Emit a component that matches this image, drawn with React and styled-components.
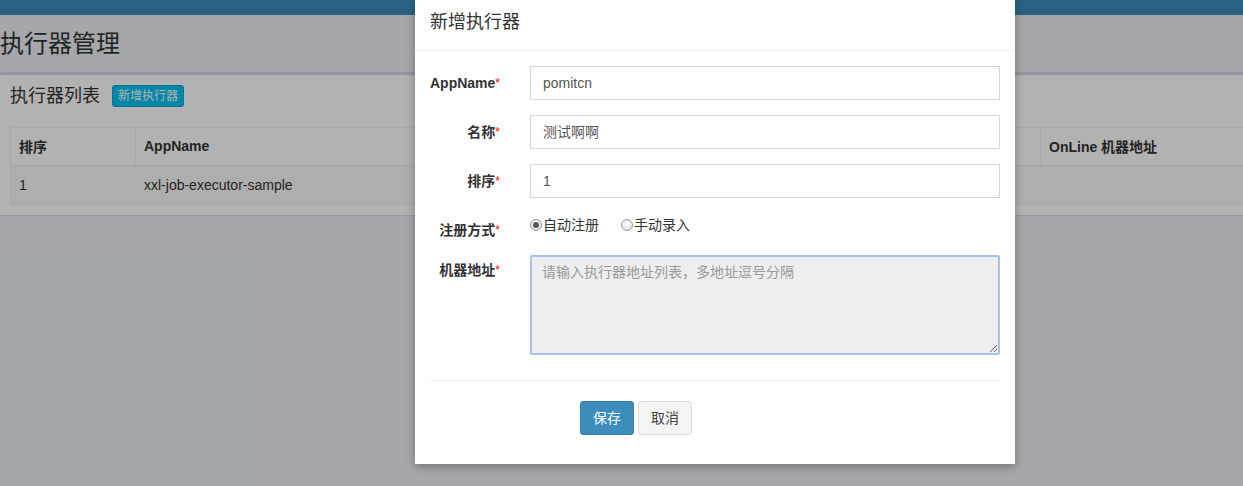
import styled, { createGlobalStyle } from 'styled-components'

const GlobalStyle = createGlobalStyle`
  html, body {
    margin: 0;
    padding: 0;
    background: #ecf0f5;
    overflow: hidden;
  }
  body {
    font-family: "Liberation Sans", "Noto Sans CJK SC", sans-serif;
    font-size: 14px;
    color: #333;
  }
  * { box-sizing: border-box; }
`

const Page = styled.div`
  width: 1243px;
  height: 486px;
  position: relative;
  overflow: hidden;
`

const TopBar = styled.div`
  height: 15px;
  background: #3c8dbc;
`

const PageTitle = styled.h1`
  margin: 0;
  padding: 14px 0 0;
  height: 57px;
  font-size: 24px;
  font-weight: 400;
  line-height: 30px;
  color: #333;
`

const Box = styled.div`
  width: 1270px;
  background: #fff;
  border-top: 3px solid #d2d6de;
  border-radius: 3px;
  box-shadow: 0 1px 1px rgba(0, 0, 0, 0.1);
  padding-bottom: 10px;
`

const BoxHeader = styled.div`
  display: flex;
  align-items: center;
  gap: 12px;
  padding: 9px 10px 19px;
`

const BoxTitle = styled.h3`
  margin: 0;
  font-size: 18px;
  font-weight: 400;
  line-height: 24px;
`

const SmallButton = styled.span`
  display: inline-block;
  background: #00c0ef;
  color: #fff;
  font-size: 12px;
  line-height: 20px;
  padding: 0 5px;
  border: 1px solid #00acd6;
  border-radius: 3px;
`

const Table = styled.table`
  margin: 0 10px;
  width: 1260px;
  border-collapse: collapse;
  border: 1px solid #f4f4f4;
`

const Th = styled.th`
  text-align: left;
  font-weight: 700;
  padding: 8px;
  height: 38px;
  border: 1px solid #f4f4f4;
  border-bottom-width: 2px;
  width: ${(p) => p.w || 'auto'};
`

const Td = styled.td`
  padding: 8px;
  height: 39px;
  border: 1px solid #f4f4f4;
  background: #f9f9f9;
  color: #333;
`

const Backdrop = styled.div`
  position: absolute;
  inset: 0;
  background: rgba(0, 0, 0, 0.3);
`

const Modal = styled.div`
  position: absolute;
  left: 415px;
  top: 0;
  width: 600px;
  background: #fff;
  box-shadow: 0 3px 9px rgba(0, 0, 0, 0.3);
`

const ModalHeader = styled.div`
  padding: 10px 15px 15px;
  border-bottom: 1px solid #f4f4f4;
  font-size: 18px;
  line-height: 25px;
  color: #333;
`

const ModalBody = styled.div`
  padding: 15px 15px 29px;
`

const FormRow = styled.div`
  display: grid;
  grid-template-columns: 85px 1fr;
  column-gap: 15px;
  align-items: start;
  margin-bottom: ${(p) => p.mb ?? 15}px;
`

const Label = styled.label`
  text-align: right;
  white-space: nowrap;
  font-weight: 700;
  font-size: 14px;
  line-height: 20px;
  padding-right: 15px;
  padding-top: ${(p) => p.pt || 7}px;
  height: ${(p) => p.h || 'auto'};
  color: #333;
`

const Req = styled.span`
  color: #f00;
  font-size: 12px;
  font-weight: 400;
  vertical-align: top;
`

const Input = styled.div`
  height: 34px;
  border: 1px solid #d2d6de;
  padding: 6px 12px;
  font-size: 14px;
  line-height: 20px;
  color: #555;
`

const TextArea = styled.textarea`
  display: block;
  width: 100%;
  height: 100px;
  border: 2px solid #a4c2f4;
  background: #eee;
  padding: 5px 10px;
  font-family: "Liberation Sans", "Noto Sans CJK SC", sans-serif;
  font-size: 14px;
  line-height: 20px;
  color: #555;
  outline: none;
  border-radius: 2px;
  &::placeholder { color: #999; }
`

const RadioGroup = styled.div`
  display: flex;
  align-items: flex-start;
  gap: 22px;
  padding-top: 2px;
  height: 27px;
`

const RadioItem = styled.span`
  display: inline-flex;
  align-items: center;
  font-size: 14px;
  line-height: 20px;
  color: #333;
`

const RadioDot = styled.span`
  width: 12px;
  height: 12px;
  border-radius: 50%;
  border: 1px solid #999;
  background: radial-gradient(circle at 50% 35%, #fdfdfd, #dcdcdc);
  margin-right: 1px;
  display: inline-flex;
  align-items: center;
  justify-content: center;
  &::after {
    content: '';
    width: 6px;
    height: 6px;
    border-radius: 50%;
    background: ${(p) => (p.checked ? '#555' : 'transparent')};
  }
`

const Divider = styled.div`
  height: 1px;
  background: #eee;
  margin: 25px 0 20px;
`

const Actions = styled.div`
  display: flex;
  gap: 4px;
  padding-left: 150px;
`

const Button = styled.span`
  display: inline-block;
  height: 34px;
  padding: 0 12px;
  line-height: 32px;
  font-size: 14px;
  border-radius: 3px;
  border: 1px solid ${(p) => (p.primary ? '#367fa9' : '#ddd')};
  background: ${(p) => (p.primary ? '#3c8dbc' : '#f4f4f4')};
  color: ${(p) => (p.primary ? '#fff' : '#444')};
`

export default function App() {
  return (
    <Page>
      <GlobalStyle />
      <TopBar />
      <PageTitle>执行器管理</PageTitle>
      <Box>
        <BoxHeader>
          <BoxTitle>执行器列表</BoxTitle>
          <SmallButton>新增执行器</SmallButton>
        </BoxHeader>
        <Table>
          <thead>
            <tr>
              <Th w="125px">排序</Th>
              <Th w="300px">AppName</Th>
              <Th w="300px">名称</Th>
              <Th w="305px">注册方式</Th>
              <Th>OnLine 机器地址</Th>
            </tr>
          </thead>
          <tbody>
            <tr>
              <Td>1</Td>
              <Td>xxl-job-executor-sample</Td>
              <Td>示例执行器</Td>
              <Td>自动注册</Td>
              <Td></Td>
            </tr>
          </tbody>
        </Table>
      </Box>
      <Backdrop />
      <Modal>
        <ModalHeader>新增执行器</ModalHeader>
        <ModalBody>
          <FormRow>
            <Label>AppName<Req>*</Req></Label>
            <Input>pomitcn</Input>
          </FormRow>
          <FormRow>
            <Label>名称<Req>*</Req></Label>
            <Input>测试啊啊</Input>
          </FormRow>
          <FormRow>
            <Label>排序<Req>*</Req></Label>
            <Input>1</Input>
          </FormRow>
          <FormRow>
            <Label pt={7} h="27px">注册方式<Req>*</Req></Label>
            <RadioGroup>
              <RadioItem><RadioDot checked />自动注册</RadioItem>
              <RadioItem><RadioDot />手动录入</RadioItem>
            </RadioGroup>
          </FormRow>
          <FormRow mb={0}>
            <Label pt={5}>机器地址<Req>*</Req></Label>
            <TextArea readOnly placeholder="请输入执行器地址列表，多地址逗号分隔" />
          </FormRow>
          <Divider />
          <Actions>
            <Button primary>保存</Button>
            <Button>取消</Button>
          </Actions>
        </ModalBody>
      </Modal>
    </Page>
  )
}
